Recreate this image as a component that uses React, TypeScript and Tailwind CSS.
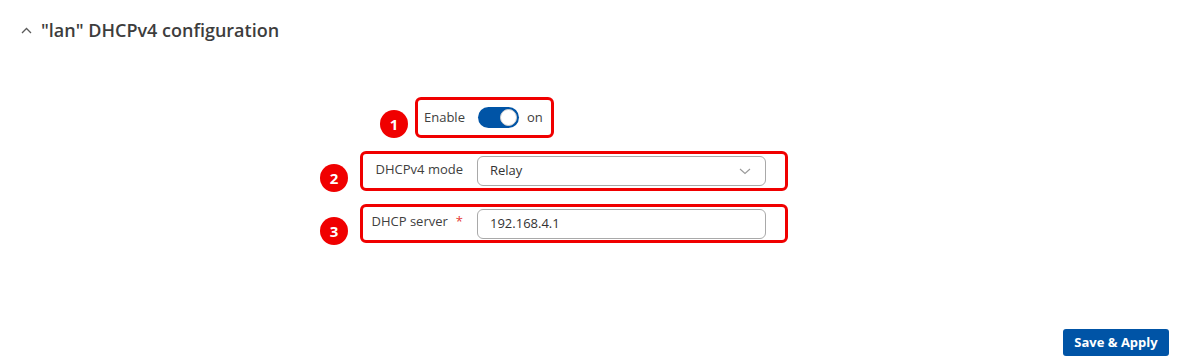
import React from 'react';

function Marker({ n, className }: { n: number; className?: string }) {
  return <div className={`flex h-[28px] w-[28px] shrink-0 items-center justify-center rounded-full bg-[#f00000] text-[15px] font-bold leading-none text-white ${className ?? ''}`}>
      {n}
    </div>;
}

export default function App() {
  return <div className="flex h-[361px] w-full flex-col bg-white text-[#404040]" style={{ fontFamily: '"Open Sans", "Liberation Sans", sans-serif' }}>
      <div className="flex items-center pl-[21px] pt-[18px]">
        <svg width="11" height="7" viewBox="0 0 11 7" fill="none" className="mt-[1px]">
          <path d="M1 6L5.5 1.5L10 6" stroke="#5a5a5a" strokeWidth="1.3" />
        </svg>
        <h2 className="ml-[9px] text-[18px] font-semibold leading-[24px] text-[#3d3d3d]">"lan" DHCPv4 configuration</h2>
      </div>

      <div className="ml-[380px] mt-[55px] flex items-start">
        <Marker n={1} className="mr-[7px] mt-[13px]" />
        <div className="flex h-[41px] items-center rounded-[6px] border-[3px] border-[#f00000] pl-[6px] pr-[8px] text-[13px]">
          <span className="w-[39px]">Enable</span>
          <div className="ml-[15px] flex h-[21px] w-[41px] items-center justify-end rounded-full bg-[#0054a6] pr-[2px]">
            <div className="h-[17px] w-[17px] rounded-full border border-[#d0d0d0] bg-white" />
          </div>
          <span className="ml-[8px]">on</span>
        </div>
      </div>

      <div className="ml-[320px] mt-[13px] flex items-start">
        <Marker n={2} className="mr-[12px] mt-[13px]" />
        <div className="flex h-[40px] w-[428px] items-center rounded-[6px] border-[3px] border-[#f00000] text-[13px]">
          <span className="-mt-[3px] w-[100px] text-right">DHCPv4 mode</span>
          <div className="ml-[14px] flex h-[30px] w-[289px] items-center justify-between rounded-[6px] border border-[#a9a9a9] pl-[12px] pr-[14px] text-[#333]">
            <span>Relay</span>
            <svg width="12" height="7" viewBox="0 0 12 7" fill="none">
              <path d="M1 1L6 5.5L11 1" stroke="#9a9a9a" strokeWidth="1.1" />
            </svg>
          </div>
        </div>
      </div>

      <div className="ml-[320px] mt-[12px] flex items-start">
        <Marker n={3} className="mr-[12px] mt-[13px]" />
        <div className="flex h-[39px] w-[428px] items-center rounded-[6px] border-[3px] border-[#f00000] text-[13px]">
          <span className="-mt-[3px] flex w-[100px] justify-end">
            DHCP server<span className="ml-[8px] text-[#e53935]">*</span>
          </span>
          <div className="ml-[14px] flex h-[30px] w-[289px] items-center rounded-[6px] border border-[#a9a9a9] pl-[12px] text-[#333]">
            192.168.4.1
          </div>
        </div>
      </div>

      <div className="mt-auto flex justify-end pb-[5px] pr-[22px]">
        <button className="h-[27px] w-[106px] rounded-[3px] bg-[#0054a6] text-[13px] font-bold text-white">Save &amp; Apply</button>
      </div>
    </div>;
}
